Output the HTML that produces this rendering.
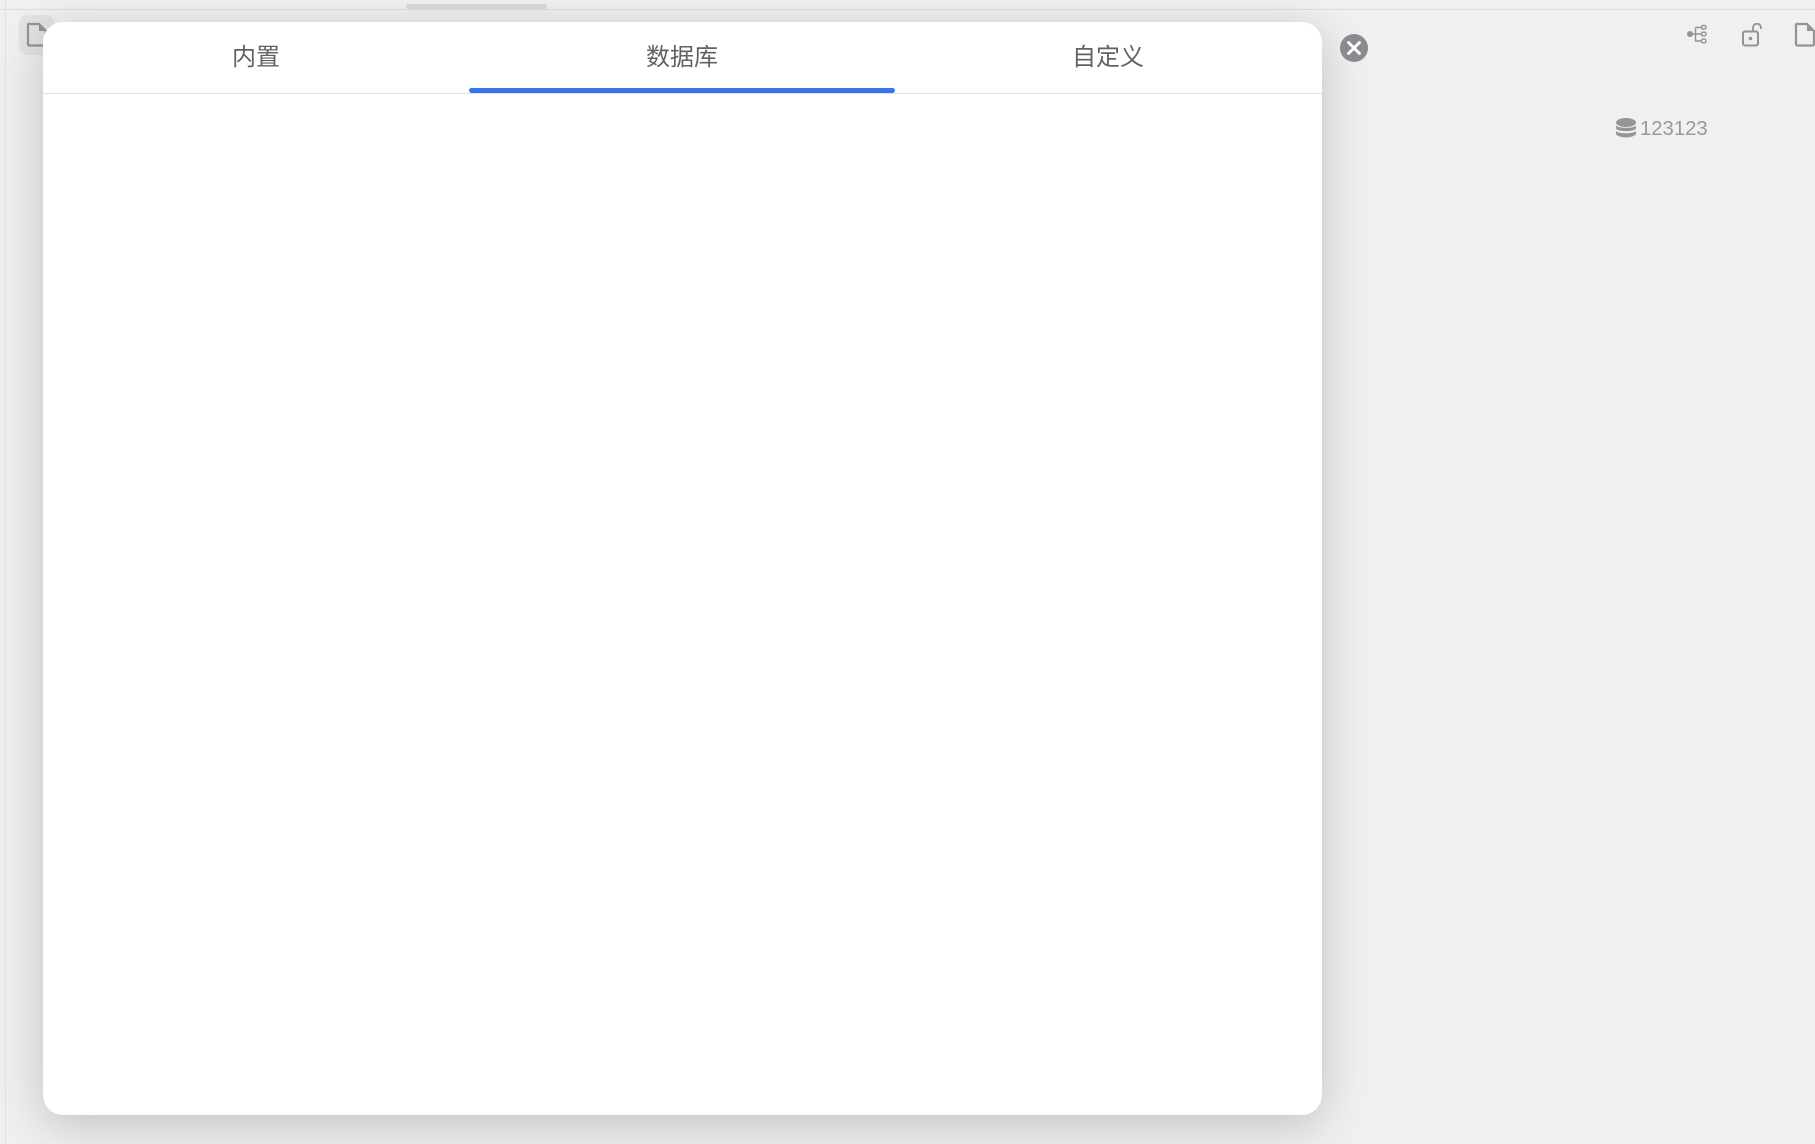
<!DOCTYPE html>
<html lang="zh">
<head>
<meta charset="utf-8">
<title>数据库</title>
<style>
html,body{margin:0;padding:0;width:1815px;height:1144px;overflow:hidden;background:#f0f0f0;font-family:"Liberation Sans","Noto Sans CJK SC",sans-serif}
.abs{position:absolute}
#top{left:0;top:0;width:1815px;height:9px;background:#f1f1f1;border-bottom:1px solid #dcdcdc}
#vl{left:5px;top:0;width:1px;height:1144px;background:#e2e2e2}
#sb{left:406px;top:4px;width:141px;height:5px;background:#dadada;border-radius:3px}
#btn{left:19px;top:15px;width:36px;height:40px;background:#e3e3e3;border-radius:9px}
#panel{left:43px;top:22px;width:1279px;height:1093px;background:#fff;border-radius:20px;box-shadow:0 10px 48px rgba(0,0,0,.2);overflow:hidden}
#line{left:0;top:71px;width:1279px;height:1px;background:#e2e2e2}
.tab{top:0;width:426px;height:71px;line-height:72px;text-align:center;font-size:24px;color:#606266;font-family:"Liberation Sans","Noto Sans CJK SC",sans-serif;font-weight:400}
#bar{left:426px;top:66px;width:426px;height:5px;background:#3574ee;border-radius:3px}
#txt{left:1640px;top:117px;font-size:20.300px;line-height:24px;color:#999}
svg{position:absolute;display:block}
</style>
</head>
<body>
<div class="abs" id="top"></div>
<div class="abs" id="vl"></div>
<div class="abs" id="sb"></div>
<div class="abs" id="btn"></div>
<svg style="left:26px;top:22px" width="22" height="25" viewBox="0 0 22 25"><path d="M2.500 2H13L20 9V22a1.500 1.500 0 0 1-1.500 1.500H3.500A1.500 1.500 0 0 1 2 22V2.500Z" fill="none" stroke="#949494" stroke-width="2.200"/><path d="M13 1.500L20.500 9H13Z" fill="#949494"/></svg>

<div class="abs" id="panel">
  <div class="abs tab" style="left:0">内置</div>
  <div class="abs tab" style="left:426px">数据库</div>
  <div class="abs tab" style="left:852px">自定义</div>
  <div class="abs" id="line"></div>
  <div class="abs" id="bar"></div>
</div>

<svg style="left:1339.500px;top:34px" width="28" height="28" viewBox="0 0 28 28"><circle cx="14" cy="14" r="14" fill="#8a8b8e"/><path d="M8.500 8.500L19.500 19.500M19.500 8.500L8.500 19.500" stroke="#fff" stroke-width="2.800" stroke-linecap="round"/></svg>

<svg style="left:1687px;top:24px" width="21" height="21" viewBox="0 0 21 21"><circle cx="3" cy="10" r="3" fill="#939393"/><path d="M3 10H14M8.500 3.500V17H14M8.500 3.500H14" fill="none" stroke="#939393" stroke-width="1.400"/><rect x="14.500" y="1.500" width="4.500" height="3.600" rx="1.500" fill="none" stroke="#939393" stroke-width="1.400"/><rect x="14.500" y="8.200" width="4.500" height="3.600" rx="1.500" fill="none" stroke="#939393" stroke-width="1.400"/><rect x="14.500" y="15.200" width="4.500" height="3.600" rx="1.500" fill="none" stroke="#939393" stroke-width="1.400"/></svg>

<svg style="left:1741px;top:23px" width="23" height="24" viewBox="0 0 23 24"><rect x="2" y="8.500" width="15" height="14" rx="2" fill="none" stroke="#939393" stroke-width="2"/><circle cx="9.500" cy="15.500" r="1.800" fill="#939393"/><path d="M12 8.500V5a4 4 0 0 1 8-.5V6" fill="none" stroke="#939393" stroke-width="1.800"/></svg>

<svg style="left:1794px;top:22px" width="22" height="25" viewBox="0 0 22 25"><path d="M2.500 2H13L20 9V22a1.500 1.500 0 0 1-1.500 1.500H3.500A1.500 1.500 0 0 1 2 22V2.500Z" fill="none" stroke="#949494" stroke-width="2.200"/><path d="M13 1.500L20.500 9H13Z" fill="#949494"/></svg>

<svg style="left:1616px;top:118px" width="20" height="21" viewBox="0 0 20 21"><ellipse cx="10" cy="4.500" rx="10" ry="4.500" fill="#959595"/><path d="M0 7.500C2 10.500 18 10.500 20 7.500V10.500C18 14 2 14 0 10.500Z" fill="#959595"/><path d="M0 13C2 16 18 16 20 13V16C18 20.500 2 20.500 0 16Z" fill="#959595"/></svg>
<div class="abs" id="txt">123123</div>
</body>
</html>
